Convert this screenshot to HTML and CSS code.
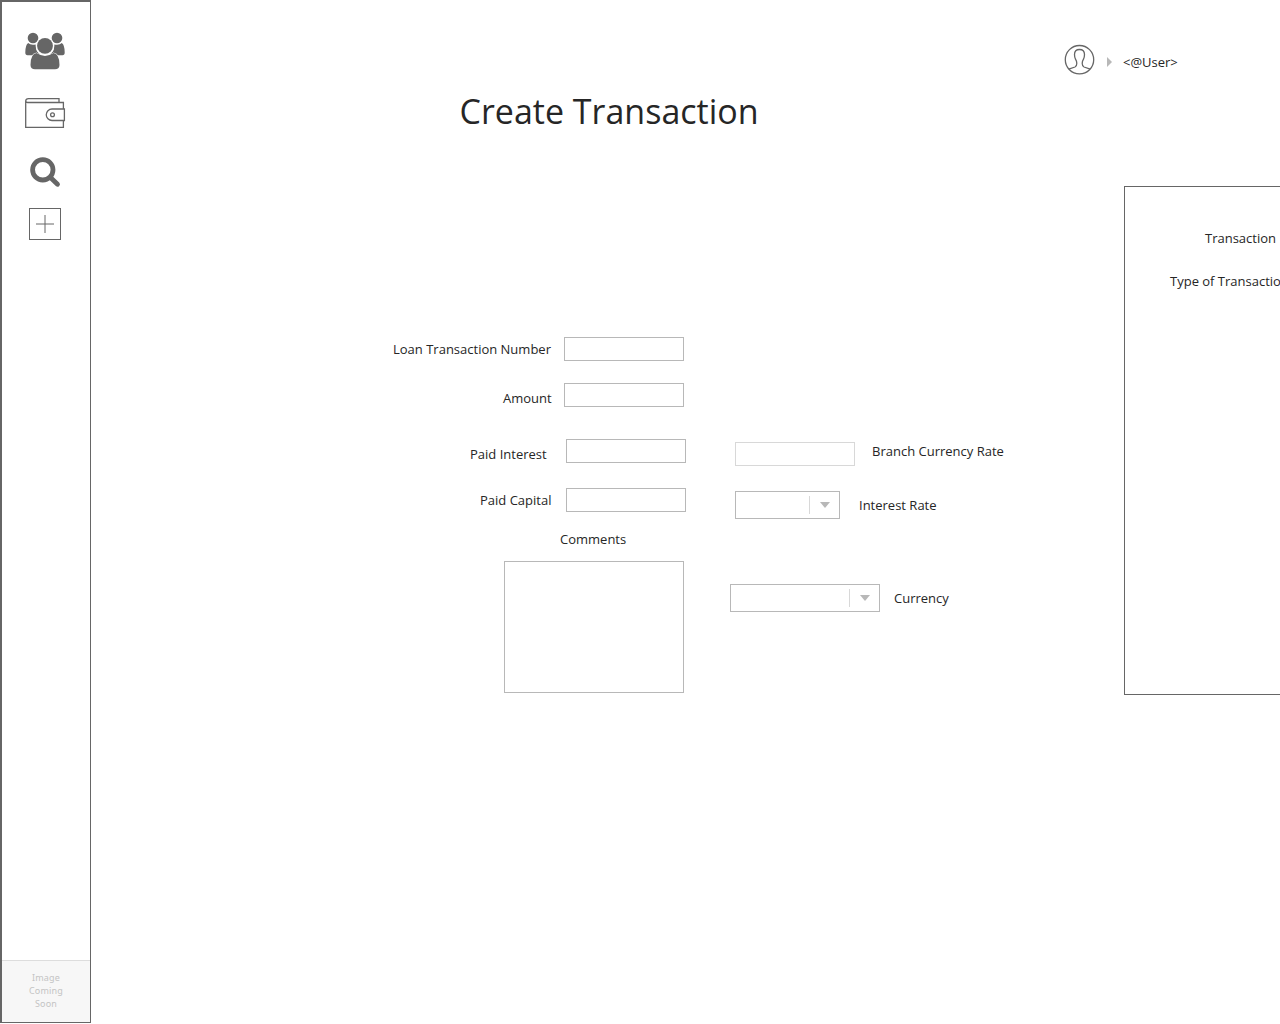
FILE: index.html
```html
<!DOCTYPE html>
<html lang="en">
<head>
<meta charset="utf-8">
<title>Create Transaction</title>
<link rel="stylesheet" href="styles.css">
</head>
<body>
<nav class="sidebar">
  <svg class="icon-users" width="40" height="38" viewBox="0 0 40 38">
    <circle cx="8" cy="6" r="5.3"/><circle cx="32" cy="6" r="5.3"/>
    <path d="M3.200 11Q5.500 13.300 10.600 12.400L11 16.500Q12 20.500 14.500 21.500L9 23.200H2.500Q.3 23.200 .3 20.500Q.3 13 3.200 11Z"/>
    <path d="M36.800 11Q34.500 13.300 29.400 12.400L29 16.500Q28 20.500 25.500 21.500L31 23.200H37.500Q39.700 23.200 39.700 20.500Q39.700 13 36.800 11Z"/>
    <path class="cutout" d="M11.500 20.500Q20 26.500 28.500 20.500Q35.500 22 35.500 33Q35 38 30 38H10Q5 38 4.500 33Q4.500 22 11.500 20.500Z"/>
    <circle class="cutout" cx="20" cy="14" r="9.200"/>
    <circle cx="20" cy="13.800" r="7.900"/>
    <path d="M11.600 21.100Q20 26.800 28.400 21.100Q34.500 22 34.500 33Q34.300 37.300 30 37.300H10Q5.700 37.300 5.500 33Q5.500 22 11.600 21.100Z"/>
  </svg>
  <svg class="icon-wallet" width="40" height="31" viewBox="0 0 40 31">
    <path d="M38.400 11V4.500H2.500Q.7 4.400.7 3Q.8.600 3.500.600H34V4.500M.7 3V29.400H38.400V22.500M39.400 11H27A5.750 5.750 0 0 0 27 22.500H39.400Z"/>
    <circle cx="27.500" cy="16.800" r="1.900"/>
  </svg>
  <svg class="icon-search" width="32" height="32" viewBox="0 0 32 32">
    <circle cx="12.800" cy="12.800" r="10.200"/><path d="M21 21L27.500 27.300"/>
  </svg>
  <svg class="icon-add" width="32" height="32" viewBox="0 0 32 32">
    <rect x=".5" y=".5" width="31" height="31"/><path d="M7 16H25M16 7V25"/>
  </svg>
  <div class="placeholder">Image<br>Coming<br>Soon</div>
</nav>
<main class="content">
  <h1 class="title">Create Transaction</h1>
  <form class="form">
    <div class="payments">
      <div class="row row-number"><label for="number">Loan Transaction Number</label><input class="field" id="number"></div>
      <div class="row row-amount"><label for="amount">Amount</label><input class="field" id="amount"></div>
      <div class="row row-interest"><label for="interest">Paid Interest</label><input class="field" id="interest"></div>
      <div class="row row-capital"><label for="capital">Paid Capital</label><input class="field" id="capital"></div>
      <label class="comments-label" for="comments">Comments</label>
      <textarea class="comments" id="comments"></textarea>
    </div>
    <div class="rates">
      <div class="rate rate-branch"><input class="field muted" id="branch"><label for="branch">Branch Currency Rate</label></div>
      <div class="rate rate-interest">
        <div class="select"><span class="toggle"><svg width="10" height="6"><path d="M0 0H10L5 6Z"/></svg></span></div>
        <span>Interest Rate</span>
      </div>
      <div class="rate rate-currency">
        <div class="select wide"><span class="toggle"><svg width="10" height="6"><path d="M0 0H10L5 6Z"/></svg></span></div>
        <span>Currency</span>
      </div>
    </div>
  </form>
</main>
<aside class="side">
  <div class="user">
    <svg class="avatar" width="30" height="30" viewBox="-0.500 -0.700 30 30">
      <circle cx="15" cy="15" r="14.200"/>
      <path d="M4.200 24.400L10.500 22.300Q12.300 21.500 12.300 18.500Q12.200 16.500 11 14.500Q10 12.500 10 9.800Q10 4.800 15 4.800T20 9.800Q20 12.500 19 14.500Q17.800 16.500 17.700 18.500Q17.700 21.500 19.500 22.300L25.800 24.400"/>
    </svg>
    <svg class="caret" width="5" height="10"><path d="M0 0L5 5L0 10Z"/></svg>
    <span class="username">&lt;@User&gt;</span>
  </div>
  <section class="panel">
    <p class="detail number">Transaction</p>
    <p class="detail">Type of Transaction</p>
  </section>
</aside>
</body>
</html>
```

FILE: styles.css
```css
* { box-sizing: border-box; }
body {
  margin: 0;
  height: 1024px;
  display: flex;
  overflow: hidden;
  background: #fff;
  color: #262626;
  font: 13px/18px "Open Sans", sans-serif;
}
svg { display: block; flex: none; overflow: visible; }

.sidebar {
  flex: none;
  width: 91px;
  height: 1023px;
  display: flex;
  flex-direction: column;
  align-items: center;
  padding-top: 30px;
  border: solid #666;
  border-width: 2px 1px 1px 2px;
}
.icon-users { fill: #666; margin-right: 2px; }
.icon-users .cutout { fill: #fff; }
.icon-wallet { margin: 28px 2px 0 0; fill: none; stroke: #666; stroke-width: 1.3; }
.icon-search { margin: 28px 0 0; fill: none; stroke: #666; stroke-width: 4.8; stroke-linecap: round; }
.icon-add { margin: 19px 2px 0 0; fill: none; stroke: #666; }
.placeholder {
  width: 100%;
  height: 62px;
  margin-top: auto;
  padding-top: 10px;
  border-top: 1px solid #ddd;
  background: #f7f7f7;
  color: #c4c4c4;
  font: 9px/13px "Noto Sans", sans-serif;
  letter-spacing: 0.2px;
  text-align: center;
}

.content { flex: none; width: 973px; padding-top: 87px; }
.title { margin: 0 0 0 368.5px; font-size: 34px; line-height: 48px; font-weight: 400; }
.form { display: flex; margin-top: 202px; }
.payments { width: 595px; display: flex; flex-direction: column; align-items: flex-end; }
.row { display: flex; height: 24px; }
.field { width: 120px; height: 24px; padding: 0 6px; border: 1px solid #b8b8b8; background: #fff; font: inherit; }
.field.muted { border-color: #d8d8d8; }
.row-number { margin-right: 2px; }
.row-number label { width: 171px; margin-top: 3px; }
.row-amount { margin: 22px 2px 0 0; }
.row-amount label { width: 61px; margin-top: 6px; }
.row-interest { margin-top: 32px; }
.row-interest label { width: 96px; margin-top: 6px; }
.row-capital { margin-top: 25px; }
.row-capital label { width: 86px; margin-top: 3px; }
.comments-label { width: 126px; margin-top: 18px; }
.comments { width: 180px; height: 132px; margin: 13px 2px 0 0; border: 1px solid #b8b8b8; resize: none; }

.rates { padding: 105px 0 0 44px; }
.rate { display: flex; white-space: nowrap; }
.rate-branch { margin-left: 5px; gap: 17px; }
.rate-interest { margin: 25px 0 0 5px; gap: 19px; }
.rate-interest > span, .rate-currency > span { margin-top: 5px; }
.rate-currency { margin-top: 65px; gap: 14px; }
.select { width: 105px; height: 28px; padding: 4px 0; display: flex; justify-content: flex-end; border: 1px solid #b8b8b8; }
.select.wide { width: 150px; }
.toggle { width: 30px; height: 18px; padding: 6px 0 0 10px; border-left: 1px solid #d8d8d8; }
.toggle svg, .caret { fill: #b8b8b8; }

.side { flex: none; width: 216px; padding-top: 44px; }
.user { display: flex; }
.avatar { fill: none; stroke: #666; stroke-width: 1.3; }
.caret { margin: 13px 11px 0 13px; }
.username { margin-top: 9px; }
.panel { height: 509px; margin: 112px 0 0 60px; padding: 42px 0 0 45px; border: 1px solid #666; border-right: 0; }
.detail { margin: 0; white-space: nowrap; }
.detail.number { margin: 0 0 25px 35px; }
```
